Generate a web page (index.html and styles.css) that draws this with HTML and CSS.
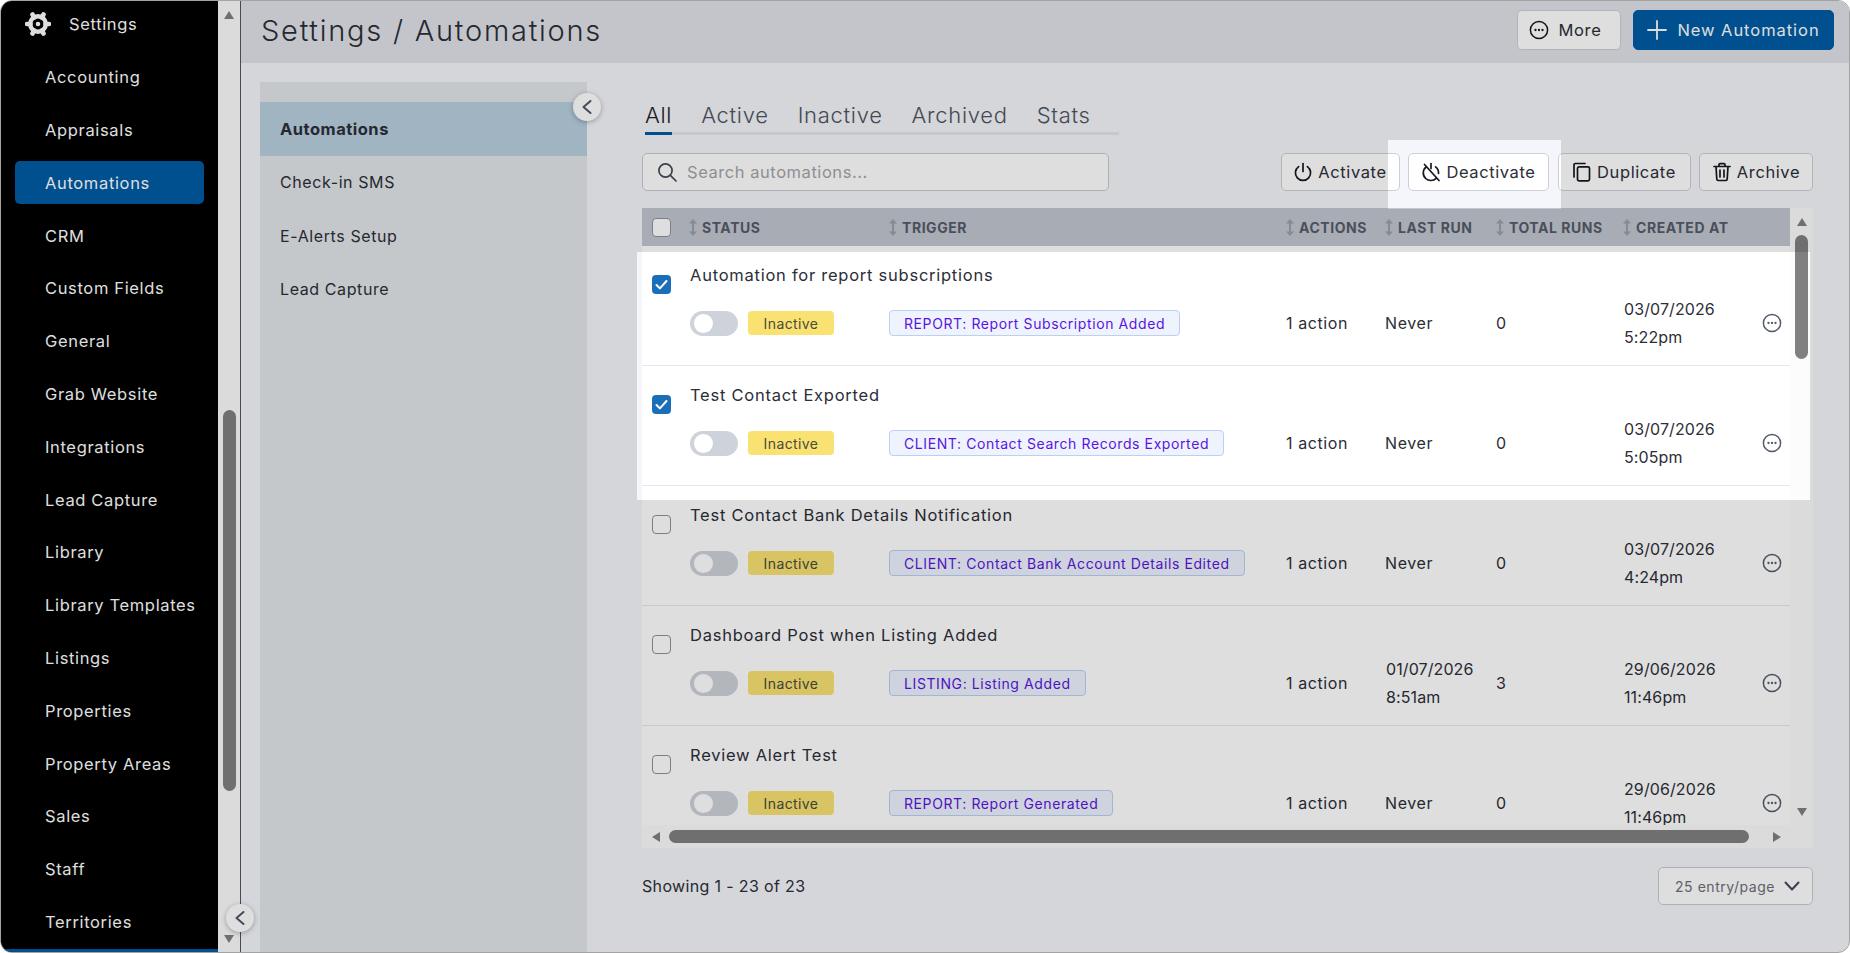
FILE: index.html
```html
<!DOCTYPE html>
<html lang="en">
<head>
    <meta charset="UTF-8">
    <title>Settings / Automations</title>
    <link rel="stylesheet" href="styles.css">
</head>
<body>

<svg class="defs" width="0" height="0">
    <symbol id="dots" viewBox="0 0 20 20">
        <circle cx="10" cy="10" r="8.6" fill="none" stroke="currentColor" stroke-width="1.5"/>
        <circle cx="6.5" cy="10" r="1.15" fill="currentColor"/>
        <circle cx="10" cy="10" r="1.15" fill="currentColor"/>
        <circle cx="13.5" cy="10" r="1.15" fill="currentColor"/>
    </symbol>
    <symbol id="sort" viewBox="0 0 10 19">
        <path d="M5 2v15" stroke="currentColor" stroke-width="2"/>
        <path d="M1 5.5 5 1l4 4.5zM1 13.5 5 18l4-4.5z" fill="currentColor"/>
    </symbol>
    <symbol id="chev-left" viewBox="0 0 14 16">
        <path d="M10.5 2 3.5 8l7 6" fill="none" stroke="currentColor" stroke-width="2" stroke-linecap="round" stroke-linejoin="round"/>
    </symbol>
    <symbol id="check" viewBox="0 0 19 19">
        <path d="M4.5 10l3.4 3.4 6.6-7.4" fill="none" stroke="#fff" stroke-width="2" stroke-linecap="round" stroke-linejoin="round"/>
    </symbol>
</svg>

<div class="window">
    <aside class="sidebar">
        <nav class="side-nav">
            <a class="side-head">
                <svg class="gear" viewBox="0 0 26 26">
                    <circle cx="13" cy="13" r="7.8" fill="none" stroke="#fff" stroke-width="4.4"/>
                    <path d="M13 13 24 13M13 13 18.5 3.5M13 13 7.5 3.5M13 13 2 13M13 13 7.5 22.5M13 13 18.5 22.5" stroke="#fff" stroke-width="4.6" stroke-linecap="round" stroke-dasharray="0 7.5 4 20"/>
                </svg>
                <span>Settings</span>
            </a>
            <a class="side-link">Accounting</a>
            <a class="side-link">Appraisals</a>
            <a class="side-link active">Automations</a>
            <a class="side-link">CRM</a>
            <a class="side-link">Custom Fields</a>
            <a class="side-link">General</a>
            <a class="side-link">Grab Website</a>
            <a class="side-link">Integrations</a>
            <a class="side-link">Lead Capture</a>
            <a class="side-link">Library</a>
            <a class="side-link">Library Templates</a>
            <a class="side-link">Listings</a>
            <a class="side-link">Properties</a>
            <a class="side-link">Property Areas</a>
            <a class="side-link">Sales</a>
            <a class="side-link">Staff</a>
            <a class="side-link">Territories</a>
        </nav>
        <div class="side-strip"></div>
    </aside>
    <div class="side-scroll">
        <span class="arrow up"></span>
        <span class="side-thumb"></span>
        <span class="arrow down"></span>
    </div>

    <main class="main">
        <header class="top-bar">
            <h1>Settings / Automations</h1>
            <div class="top-actions">
                <button class="btn btn-more"><svg class="ico-20"><use href="#dots"/></svg>More</button>
                <button class="btn btn-primary">
                    <svg class="ico-20" viewBox="0 0 20 20"><path d="M10 1v18M1 10h18" stroke="currentColor" stroke-width="1.8" stroke-linecap="round"/></svg>
                    New Automation
                </button>
            </div>
        </header>

        <div class="body">
            <section class="panel">
                <a class="panel-link active">Automations</a>
                <a class="panel-link">Check-in SMS</a>
                <a class="panel-link">E-Alerts Setup</a>
                <a class="panel-link">Lead Capture</a>
            </section>

            <section class="content">
                <div class="tabs">
                    <a class="tab active">All</a>
                    <a class="tab">Active</a>
                    <a class="tab">Inactive</a>
                    <a class="tab">Archived</a>
                    <a class="tab">Stats</a>
                </div>

                <div class="toolbar">
                    <label class="search">
                        <svg class="ico-20" viewBox="0 0 20 20"><circle cx="8.5" cy="8.5" r="6.6" fill="none" stroke="currentColor" stroke-width="1.7"/><path d="M13.4 13.4 19 19" stroke="currentColor" stroke-width="1.7" stroke-linecap="round"/></svg>
                        <span>Search automations...</span>
                    </label>
                    <div class="bulk">
                        <button class="btn btn-activate">
                            <svg class="ico-20" viewBox="0 0 20 20"><path d="M10 1.5v8" stroke="currentColor" stroke-width="1.7" stroke-linecap="round"/><path d="M5.6 4.6a7.6 7.6 0 1 0 8.8 0" fill="none" stroke="currentColor" stroke-width="1.7" stroke-linecap="round"/></svg>
                            Activate
                        </button>
                        <button class="btn btn-deactivate">
                            <svg class="ico-20" viewBox="0 0 20 20"><path d="M10 1.5v5" stroke="currentColor" stroke-width="1.7" stroke-linecap="round"/><path d="M5.4 4.8A7.6 7.6 0 0 0 4.7 16.5 7.6 7.6 0 0 0 15.2 16.3M17.5 11.5A7.6 7.6 0 0 0 14.6 4.8" fill="none" stroke="currentColor" stroke-width="1.7" stroke-linecap="round"/><path d="M3.5 2.5 18 18.5" stroke="currentColor" stroke-width="1.7" stroke-linecap="round"/></svg>
                            Deactivate
                        </button>
                        <button class="btn btn-duplicate">
                            <svg class="ico-20" viewBox="0 0 20 20"><path d="M2 15V2.8C2 2 2.6 1.5 3.3 1.5H13" fill="none" stroke="currentColor" stroke-width="1.7" stroke-linecap="round"/><rect x="5.5" y="4.8" width="12" height="14" rx="1.6" fill="none" stroke="currentColor" stroke-width="1.7"/></svg>
                            Duplicate
                        </button>
                        <button class="btn btn-archive">
                            <svg class="ico-20" viewBox="0 0 20 20"><path d="M2 4.5h16M7 4.5V2.6c0-.6.4-1 1-1h4c.6 0 1 .4 1 1v1.9M4 4.5l.8 12.6c0 .8.7 1.4 1.4 1.4h7.6c.7 0 1.4-.6 1.4-1.4L16 4.5M8 8v7M12 8v7" fill="none" stroke="currentColor" stroke-width="1.7" stroke-linecap="round"/></svg>
                            Archive
                        </button>
                    </div>
                </div>

                <div class="table">
                    <div class="table-main">
                        <div class="row-head">
                            <span class="cell-check"><span class="checkbox"></span></span>
                            <span class="th"><svg class="sort"><use href="#sort"/></svg>STATUS</span>
                            <span class="th"><svg class="sort"><use href="#sort"/></svg>TRIGGER</span>
                            <span class="th"><svg class="sort"><use href="#sort"/></svg>ACTIONS</span>
                            <span class="th"><svg class="sort"><use href="#sort"/></svg>LAST RUN</span>
                            <span class="th"><svg class="sort"><use href="#sort"/></svg>TOTAL RUNS</span>
                            <span class="th"><svg class="sort"><use href="#sort"/></svg>CREATED AT</span>
                        </div>

                        <div class="row">
                            <span class="cell-check"><span class="checkbox checked"><svg><use href="#check"/></svg></span></span>
                            <div class="row-title">Automation for report subscriptions</div>
                            <div class="cell-status"><span class="toggle"></span><span class="badge">Inactive</span></div>
                            <div class="cell-trigger"><span class="trigger">REPORT: Report Subscription Added</span></div>
                            <div class="cell">1 action</div>
                            <div class="cell">Never</div>
                            <div class="cell">0</div>
                            <div class="cell cell-date">03/07/2026<br>5:22pm</div>
                            <div class="cell-menu"><svg class="ico-20"><use href="#dots"/></svg></div>
                        </div>

                        <div class="row">
                            <span class="cell-check"><span class="checkbox checked"><svg><use href="#check"/></svg></span></span>
                            <div class="row-title">Test Contact Exported</div>
                            <div class="cell-status"><span class="toggle"></span><span class="badge">Inactive</span></div>
                            <div class="cell-trigger"><span class="trigger">CLIENT: Contact Search Records Exported</span></div>
                            <div class="cell">1 action</div>
                            <div class="cell">Never</div>
                            <div class="cell">0</div>
                            <div class="cell cell-date">03/07/2026<br>5:05pm</div>
                            <div class="cell-menu"><svg class="ico-20"><use href="#dots"/></svg></div>
                        </div>

                        <div class="row">
                            <span class="cell-check"><span class="checkbox"></span></span>
                            <div class="row-title">Test Contact Bank Details Notification</div>
                            <div class="cell-status"><span class="toggle"></span><span class="badge">Inactive</span></div>
                            <div class="cell-trigger"><span class="trigger">CLIENT: Contact Bank Account Details Edited</span></div>
                            <div class="cell">1 action</div>
                            <div class="cell">Never</div>
                            <div class="cell">0</div>
                            <div class="cell cell-date">03/07/2026<br>4:24pm</div>
                            <div class="cell-menu"><svg class="ico-20"><use href="#dots"/></svg></div>
                        </div>

                        <div class="row">
                            <span class="cell-check"><span class="checkbox"></span></span>
                            <div class="row-title">Dashboard Post when Listing Added</div>
                            <div class="cell-status"><span class="toggle"></span><span class="badge">Inactive</span></div>
                            <div class="cell-trigger"><span class="trigger">LISTING: Listing Added</span></div>
                            <div class="cell">1 action</div>
                            <div class="cell cell-date">01/07/2026<br>8:51am</div>
                            <div class="cell">3</div>
                            <div class="cell cell-date">29/06/2026<br>11:46pm</div>
                            <div class="cell-menu"><svg class="ico-20"><use href="#dots"/></svg></div>
                        </div>

                        <div class="row">
                            <span class="cell-check"><span class="checkbox"></span></span>
                            <div class="row-title">Review Alert Test</div>
                            <div class="cell-status"><span class="toggle"></span><span class="badge">Inactive</span></div>
                            <div class="cell-trigger"><span class="trigger">REPORT: Report Generated</span></div>
                            <div class="cell">1 action</div>
                            <div class="cell">Never</div>
                            <div class="cell">0</div>
                            <div class="cell cell-date">29/06/2026<br>11:46pm</div>
                            <div class="cell-menu"><svg class="ico-20"><use href="#dots"/></svg></div>
                        </div>
                    </div>

                    <div class="v-scroll">
                        <span class="arrow up"></span>
                        <span class="v-thumb"></span>
                        <span class="arrow down"></span>
                    </div>
                    <div class="h-scroll">
                        <span class="arrow left"></span>
                        <span class="h-thumb"></span>
                        <span class="arrow right"></span>
                    </div>
                    <div class="corner"></div>
                </div>

                <div class="table-foot">
                    <span>Showing 1 - 23 of 23</span>
                    <div class="page-size">
                        <span>25 entry/page</span>
                        <svg class="chev-down" viewBox="0 0 16 10"><path d="M1.5 1.5 8 8.5l6.5-7" fill="none" stroke="currentColor" stroke-width="2" stroke-linecap="round" stroke-linejoin="round"/></svg>
                    </div>
                </div>
            </section>
        </div>
    </main>

    <button class="collapse collapse-side"><svg><use href="#chev-left"/></svg></button>
    <button class="collapse collapse-panel"><svg><use href="#chev-left"/></svg></button>

    <!-- tour dimmer, the two holes are the highlighted rows and the Deactivate button -->
    <div class="dimmer"></div>
</div>

</body>
</html>
```

FILE: styles.css
```css
* {
    box-sizing: border-box;
}
body {
    margin: 0;
    background: #fff;
    font-family: Inter, "Open Sans", sans-serif;
    color: #2c2e38;
}
.defs {
    position: absolute;
}
.window {
    position: relative;
    display: flex;
    width: 1850px;
    height: 953px;
    border: 1px solid #a3a3a3;
    border-radius: 12px;
    overflow: hidden;
    background: #f4f6fb;
}

/* sidebar */
.sidebar {
    position: relative;
    width: 217px;
    flex: none;
    background: #000;
}
.side-nav {
    display: flex;
    flex-direction: column;
    gap: 9.8px;
    padding: 2px 14px 0;
}
.side-head, .side-link {
    display: flex;
    align-items: center;
    height: 43px;
    color: #fff;
    font-size: 16.5px;
    letter-spacing: 0.65px;
}
.side-head {
    padding: 0 0 2px 10px;
    gap: 18px;
}
.gear {
    width: 26px;
    height: 26px;
}
.side-link {
    padding-left: 30px;
    border-radius: 5px;
}
.side-link.active {
    background: #005ca6;
}
.side-strip {
    position: absolute;
    left: 0;
    right: 0;
    bottom: 0;
    height: 3px;
    background: #005ca6;
}
.side-scroll {
    display: flex;
    flex-direction: column;
    align-items: center;
    justify-content: space-between;
    width: 23px;
    flex: none;
    padding: 10px 0 9px;
    background: #fcfcfc;
    border-right: 1px solid #4d5568;
    position: relative;
}
.side-thumb {
    position: absolute;
    top: 409px;
    left: 5px;
    width: 13px;
    height: 381px;
    border-radius: 7px;
    background: #808080;
}

/* scrollbar arrows */
.arrow {
    width: 0;
    height: 0;
    border-style: solid;
    border-color: transparent;
}
.arrow.up {
    border-width: 0 5.5px 8px;
    border-bottom-color: #808080;
}
.arrow.down {
    border-width: 8px 5.5px 0;
    border-top-color: #808080;
}
.arrow.left {
    border-width: 5.5px 8px 5.5px 0;
    border-right-color: #808080;
}
.arrow.right {
    border-width: 5.5px 0 5.5px 8px;
    border-left-color: #808080;
}

/* main */
.main {
    flex: 1;
    display: flex;
    flex-direction: column;
    min-width: 0;
}
.top-bar {
    display: flex;
    align-items: center;
    justify-content: space-between;
    height: 62px;
    padding: 0 15px 0 20px;
    background: #e0e3e9;
}
.top-bar h1 {
    margin: 0 0 4px;
    font-size: 29px;
    font-weight: 300;
    letter-spacing: 1.75px;
}
.top-actions {
    display: flex;
    gap: 12px;
    margin-bottom: 4px;
}
.btn {
    display: flex;
    align-items: center;
    gap: 10px;
    height: 38px;
    padding: 0;
    justify-content: center;
    border: 1px solid #ccd0d6;
    border-radius: 5px;
    background: #fff;
    color: #2c2e38;
    font-family: inherit;
    font-size: 16.5px;
    letter-spacing: 0.6px;
}
.btn svg {
    color: #16181f;
}
.ico-20 {
    width: 20px;
    height: 20px;
    flex: none;
}
.top-actions .btn {
    height: 40px;
}
.btn-more {
    width: 104px;
    padding-right: 8px;
}
.btn-primary {
    width: 201px;
    border-color: #005ca6;
    background: #005ca6;
    color: #fff;
    letter-spacing: 0.95px;
}
.btn-primary svg {
    color: #fff;
}

.body {
    flex: 1;
    display: flex;
    padding: 19px 0 0 19px;
    min-height: 0;
}
.panel {
    width: 327px;
    flex: none;
    padding-top: 20px;
    background: #e2e6ea;
}
.panel-link {
    display: flex;
    align-items: center;
    height: 53.5px;
    padding-left: 20px;
    font-size: 16px;
    letter-spacing: 0.6px;
}
.panel-link.active {
    background: #b8cfdf;
    font-size: 16.5px;
    font-weight: 700;
    letter-spacing: 0.5px;
}

.content {
    width: 1171px;
    margin-left: 55px;
    flex: none;
}
.tabs {
    display: flex;
    gap: 29px;
    width: 474px;
    height: 39px;
    margin: 14px 0 0 3px;
    padding-top: 5px;
    border-bottom: 3px solid #e4e6ec;
}
.tab {
    height: 34px;
    font-size: 22px;
    font-weight: 300;
    letter-spacing: 0.7px;
    line-height: 28px;
    color: #4f545f;
}
.tab.active {
    color: #1f2129;
    border-bottom: 3px solid #005ca6;
}

.toolbar {
    display: flex;
    justify-content: space-between;
    margin-top: 18px;
}
.search {
    display: flex;
    align-items: center;
    gap: 10px;
    width: 467px;
    height: 38px;
    padding-left: 14px;
    border: 1px solid #c8ccd2;
    border-radius: 5px;
    background: #fff;
    font-size: 16.5px;
    letter-spacing: 0.55px;
    color: #a3a5aa;
}
.search svg {
    color: #444a58;
}
.bulk {
    display: flex;
    gap: 8.5px;
}
.bulk .btn {
    gap: 5px;
}
.btn-activate {
    width: 119px;
}
.btn-deactivate {
    width: 141px;
}
.btn-duplicate {
    width: 133px;
}
.btn-archive {
    width: 114px;
}

/* table */
.table {
    display: grid;
    grid-template-columns: 1148px 23px;
    grid-template-rows: 617px 23px;
    margin-top: 17px;
    background: #fcfcfc;
}
.table-main {
    overflow: hidden;
}
.row-head, .row {
    display: grid;
    grid-template-columns: 40px 200px 397px 99px 111px 127px 134px 40px;
}
.row-head {
    align-items: center;
    height: 38px;
    background: #c2c7d0;
}
.th {
    display: flex;
    align-items: center;
    gap: 4px;
    padding-left: 6px;
    font-size: 14px;
    font-weight: 700;
    letter-spacing: 0.55px;
    color: #555b69;
}
.sort {
    width: 10px;
    height: 19px;
    color: #9aa0ab;
}
.cell-check {
    display: flex;
    align-items: flex-start;
    padding-left: 10px;
}
.row-head .cell-check {
    align-items: center;
}
.checkbox {
    display: block;
    width: 19px;
    height: 19px;
    border: 1px solid #8d929c;
    border-radius: 4px;
    background: #fff;
}
.checkbox.checked {
    border: none;
    background: #1a6fb8;
}
.checkbox svg {
    display: block;
    width: 19px;
    height: 19px;
}
.row {
    grid-template-rows: 24px 56px;
    row-gap: 8px;
    height: 120px;
    padding-top: 17px;
    background: #fff;
    border-bottom: 1px solid #e6e8ef;
}
.row .cell-check {
    grid-row: 1 / 3;
    padding-top: 12px;
}
.row-title {
    grid-column: 2 / 9;
    padding-left: 8px;
    font-size: 16.5px;
    line-height: 24px;
    letter-spacing: 0.75px;
}
.cell-status {
    display: flex;
    align-items: center;
    gap: 10px;
    padding-left: 8px;
}
.toggle {
    position: relative;
    width: 48px;
    height: 25px;
    border-radius: 13px;
    background: #ced2da;
}
.toggle::after {
    content: "";
    position: absolute;
    top: 3px;
    left: 4px;
    width: 19px;
    height: 19px;
    border-radius: 50%;
    background: #fff;
}
.badge {
    display: flex;
    align-items: center;
    justify-content: center;
    width: 86px;
    height: 24px;
    border-radius: 4px;
    background: #fae272;
    font-size: 14px;
    letter-spacing: 0.4px;
    color: #4a4a3a;
}
.cell-trigger {
    display: flex;
    align-items: center;
    padding-left: 7px;
}
.trigger {
    display: flex;
    align-items: center;
    height: 26px;
    padding: 0 14px;
    border: 1px solid #bcd0f4;
    border-radius: 4px;
    background: #eef3fe;
    font-size: 14px;
    letter-spacing: 0.6px;
    color: #5a16e0;
}
.cell {
    display: flex;
    align-items: center;
    padding-left: 7px;
    font-size: 16px;
    line-height: 28px;
    letter-spacing: 0.6px;
}
.cell-date {
    display: block;
    align-self: center;
    padding-left: 8px;
    letter-spacing: 0.1px;
}
.cell-menu {
    display: flex;
    align-items: center;
    color: #555b69;
    padding-left: 12px;
}

.v-scroll {
    position: relative;
    display: flex;
    flex-direction: column;
    align-items: center;
    justify-content: space-between;
    padding: 10px 0 9px;
}
.v-thumb {
    position: absolute;
    top: 27px;
    left: 5px;
    width: 13px;
    height: 124px;
    border-radius: 7px;
    background: #808080;
}
.h-scroll {
    display: flex;
    align-items: center;
    padding-left: 10px;
}
.h-thumb {
    width: 1080px;
    height: 13px;
    margin: 0 24px 0 9px;
    border-radius: 7px;
    background: #808080;
}

.table-foot {
    display: flex;
    align-items: center;
    justify-content: space-between;
    margin-top: 19px;
    font-size: 16px;
    letter-spacing: 0.35px;
}
.page-size {
    display: flex;
    align-items: center;
    justify-content: space-between;
    width: 155px;
    height: 38px;
    padding: 0 12px 0 16px;
    border: 1px solid #c8ccd2;
    border-radius: 5px;
    background: #fff;
    font-size: 14px;
    letter-spacing: 0.55px;
    color: #6b6f78;
}
.chev-down {
    width: 16px;
    height: 10px;
    color: #444a58;
}

/* round collapse buttons on the column edges */
.collapse {
    position: absolute;
    display: flex;
    align-items: center;
    justify-content: center;
    width: 28px;
    height: 28px;
    padding: 0;
    border: none;
    border-radius: 50%;
    background: #fff;
    color: #4d5568;
    box-shadow: 0 1px 5px rgba(0, 0, 0, 0.3);
}
.collapse svg {
    width: 14px;
    height: 16px;
}
.collapse-side {
    left: 225px;
    top: 903px;
}
.collapse-panel {
    left: 572px;
    top: 92px;
}

.dimmer {
    position: absolute;
    inset: 0;
    background: rgba(0, 0, 0, 0.13);
    clip-path: path(evenodd, "M0 0H1850V953H0Z M1387 139H1560V208H1387Z M636 251H1809V499H636Z");
}
```
